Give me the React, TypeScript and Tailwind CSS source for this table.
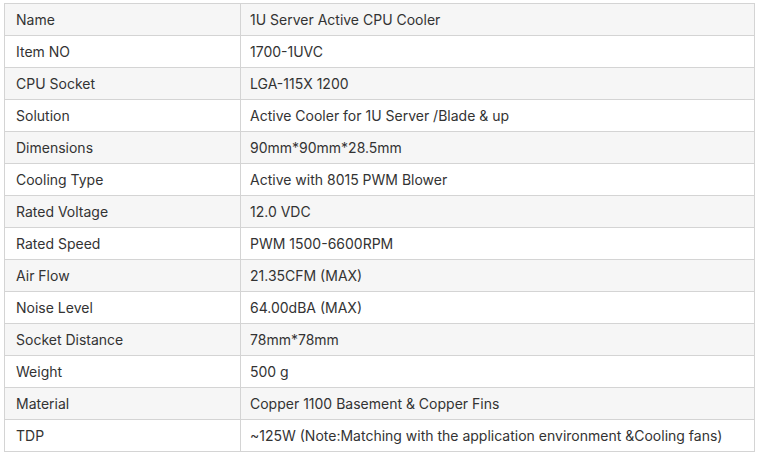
import React from 'react';

const rows: [string, string][] = [
  ['Name', '1U Server Active CPU Cooler'],
  ['Item NO', '1700-1UVC'],
  ['CPU Socket', 'LGA-115X 1200'],
  ['Solution', 'Active Cooler for 1U Server /Blade & up'],
  ['Dimensions', '90mm*90mm*28.5mm'],
  ['Cooling Type', 'Active with 8015 PWM Blower'],
  ['Rated Voltage', '12.0 VDC'],
  ['Rated Speed', 'PWM 1500-6600RPM'],
  ['Air Flow', '21.35CFM (MAX)'],
  ['Noise Level', '64.00dBA (MAX)'],
  ['Socket Distance', '78mm*78mm'],
  ['Weight', '500 g'],
  ['Material', 'Copper 1100 Basement & Copper Fins'],
  ['TDP', '~125W (Note:Matching with the application environment &Cooling fans)'],
];

export default function App() {
  return (
    <div className="w-[759px] h-[455px] bg-white pl-[4px] pt-[3px]" style={{ fontFamily: 'Inter, "Noto Sans", sans-serif' }}>
      <table className="w-[751px] border-collapse text-[14px] text-[#333]">
        <tbody>
          {rows.map(([k, v], i) => (
            <tr key={k} className={i % 2 === 0 ? 'bg-[#f6f6f6]' : 'bg-white'}>
              <td className="w-[236px] h-[32px] border border-[#d4d4d4] px-[11px] py-0 align-middle">{k}</td>
              <td className="h-[32px] border border-[#d4d4d4] px-[9px] py-0 align-middle">{v}</td>
            </tr>
          ))}
        </tbody>
      </table>
    </div>
  );
}
